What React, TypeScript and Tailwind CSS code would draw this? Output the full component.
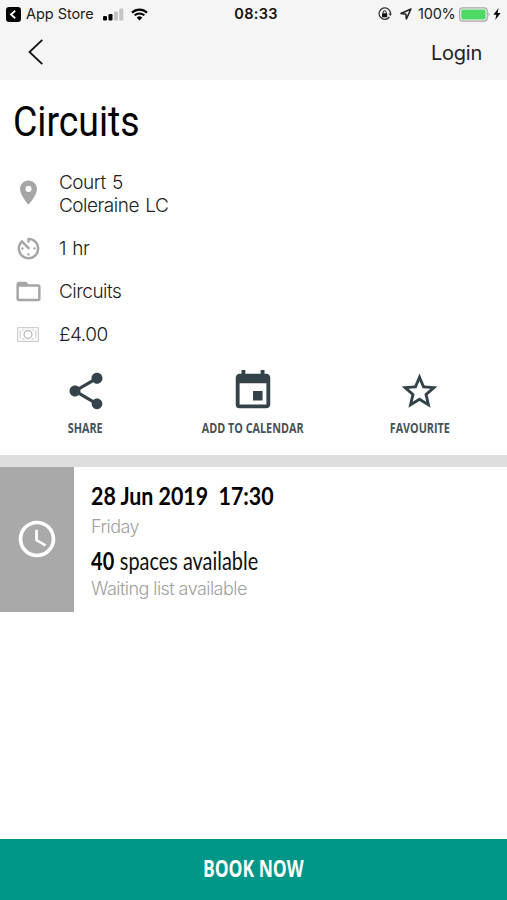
import React from 'react';
import {
  MdAvTimer,
  MdEvent,
  MdFolderOpen,
  MdPlace,
  MdSchedule,
  MdShare,
  MdStarBorder,
} from 'react-icons/md';

const StatusBar: React.FC = () => (
  <div className="grid h-7 grid-cols-[1fr_auto_1fr] items-center font-['Inter'] text-[14.5px] leading-7 text-[#222]">
    <div className="flex items-center pl-1.5">
      <svg width="15" height="15" viewBox="0 0 15 15">
        <rect width="15" height="15" rx="3.2" fill="#000" />
        <path d="M9.2 3.8 5 7.5l4.2 3.7" fill="none" stroke="#fff" strokeWidth="1.8" />
      </svg>
      <span className="ml-[5px] w-[68px] whitespace-nowrap tracking-[-0.05px]">App Store</span>
      <svg className="ml-[9px]" width="21" height="13" viewBox="0 0 21 13">
        <rect x="0" y="8" width="4" height="4.5" rx="1.2" fill="#000" />
        <rect x="5.5" y="6" width="4" height="6.5" rx="1.2" fill="#000" />
        <rect x="11" y="3.5" width="4" height="9" rx="1" fill="#c4c4c4" />
        <rect x="16.3" y="0.5" width="4" height="12" rx="1" fill="#c4c4c4" />
      </svg>
      <svg className="ml-[7px]" width="17" height="13" viewBox="0 0 17 13">
        <path d="M1 4.6a10.8 10.8 0 0 1 15 0" fill="none" stroke="#000" strokeWidth="2.2" />
        <path d="M3.6 7.4a7 7 0 0 1 9.8 0" fill="none" stroke="#000" strokeWidth="2" />
        <path d="M8.5 12.6 5.7 9.7a4 4 0 0 1 5.6 0z" fill="#000" />
      </svg>
    </div>
    <span className="pl-[5px] text-[14.5px] font-semibold tracking-[0.3px] text-[#111]">08:33</span>
    <div className="flex items-center justify-end pr-1.5">
      <svg width="14" height="14" viewBox="0 0 14 14">
        <path d="M11.4 10A5.7 5.7 0 1 1 12.5 6.6" fill="none" stroke="#333" strokeWidth="1.3" />
        <path d="M10.4 6.4h3.6l-1.7 2.6z" fill="#333" />
        <rect x="4" y="6.3" width="5.2" height="4" rx="0.5" fill="#111" />
        <path d="M5.1 6.4V5.2a1.5 1.5 0 0 1 3 0v1.2" fill="none" stroke="#111" strokeWidth="1" />
      </svg>
      <svg className="ml-2" width="12" height="12" viewBox="0 0 12 12">
        <path d="M10.9 1 1 5.4l4.9.8.5 4.8z" fill="none" stroke="#222" strokeWidth="1.6" strokeLinejoin="round" />
      </svg>
      <span className="ml-1.5 w-[38px] whitespace-nowrap text-[14.5px] tracking-[-0.2px]">100%</span>
      <svg className="ml-[3px]" width="32" height="15" viewBox="0 0 32 15">
        <rect x="0.6" y="0.9" width="27.6" height="13.2" rx="3" fill="none" stroke="#a6a6a6" strokeWidth="1.2" />
        <rect x="2.3" y="2.6" width="24.2" height="9.8" rx="1.4" fill="#4cd964" />
        <path d="M29.5 5.3q2.2 2.2 0 4.4z" fill="#a6a6a6" />
      </svg>
      <svg className="ml-0.5" width="8" height="12" viewBox="0 0 8 12">
        <path d="M5.6 0 .4 6.8h3L2.2 12l5.4-7H4.5z" fill="#000" />
      </svg>
    </div>
  </div>
);

const NavBar: React.FC = () => (
  <div className="flex h-[52px] items-center justify-between pr-[25px] pl-7">
    <button aria-label="Back" className="-mt-1">
      <svg width="16" height="28" viewBox="0 0 16 28">
        <path d="M14.3 1.8 1.5 14l12.8 12.2" fill="none" stroke="#111" strokeWidth="1.8" />
      </svg>
    </button>
    <button className="-mt-[3px] font-['Inter'] text-xl tracking-[-0.25px] text-[#222]">Login</button>
  </div>
);

interface DetailRowProps {
  icon: React.ReactNode;
  className: string;
  children: React.ReactNode;
}

const DetailRow: React.FC<DetailRowProps> = ({ icon, className, children }) => (
  <div className={`flex items-center ${className}`}>
    <div className="flex w-[56px] shrink-0 justify-center text-[#a5a5a5]">{icon}</div>
    <div className="ml-[3px] font-['Inter'] text-[19px] leading-[23px] font-light tracking-[-0.5px] text-[#222] [word-spacing:1.5px]">
      {children}
    </div>
  </div>
);

const MoneyIcon: React.FC = () => (
  <svg width="22" height="15" viewBox="0 0 22 15" fill="none" stroke="#c2c2c2">
    <rect x="0.7" y="0.7" width="20.6" height="13.6" strokeWidth="1" />
    <path d="M3.2 3.4v8.2M18.8 3.4v8.2M5 3h2.4M14.6 3H17M5 12h2.4M14.6 12H17" strokeWidth="0.9" />
    <circle cx="11" cy="7.5" r="3.9" strokeWidth="1.5" />
  </svg>
);

interface ActionProps {
  icon: React.ReactNode;
  label: string;
}

const Action: React.FC<ActionProps> = ({ icon, label }) => (
  <button className="flex w-[167px] flex-col items-center text-[#34434a]">
    <span className="flex h-[46px] items-center">{icon}</span>
    <span className="mt-[3px] inline-block scale-x-[0.72] font-['Open_Sans'] text-[15px] leading-5 font-bold whitespace-nowrap text-[#45535a]">
      {label}
    </span>
  </button>
);

export default function App() {
  return (
    <div className="flex h-[900px] w-[507px] flex-col overflow-hidden bg-white">
      <header className="h-20 shrink-0 bg-[#f5f5f5]">
        <StatusBar />
        <NavBar />
      </header>

      {/* Class details */}
      <section className="h-[375px] shrink-0">
        <h1 className="mt-[15px] ml-[13px] w-fit origin-left scale-x-[0.87] font-['Roboto'] text-[43px] leading-[52px] text-black">
          Circuits
        </h1>
        <DetailRow className="mt-6 h-[46px]" icon={<MdPlace size={29} className="-mt-[3px]" />}>
          Court 5
          <br />
          Coleraine LC
        </DetailRow>
        <DetailRow className="mt-2.5 h-[43px]" icon={<MdAvTimer size={29} />}>1 hr</DetailRow>
        <DetailRow className="h-[43px]" icon={<MdFolderOpen size={29} />}>Circuits</DetailRow>
        <DetailRow className="h-[43px]" icon={<MoneyIcon />}>£4.00</DetailRow>

        <div className="mt-3 flex justify-center pr-0.5">
          <Action icon={<MdShare size={44} />} label="SHARE" />
          <Action icon={<MdEvent size={46} />} label="ADD TO CALENDAR" />
          <Action icon={<MdStarBorder size={43} />} label="FAVOURITE" />
        </div>
      </section>

      <div className="h-3 shrink-0 bg-[#dedede]" />

      {/* Session slot */}
      <section className="flex h-[145px] shrink-0">
        <div className="flex w-[74px] items-center justify-center bg-[#a9a9a9] pb-0.5 text-white">
          <MdSchedule size={44} />
        </div>
        <div className="ml-[17px] pt-[13px] whitespace-nowrap">
          <p className="w-fit origin-left scale-x-[0.855] font-['Lato'] text-[25px] leading-[30px] font-bold text-black">
            28 Jun 2019&nbsp; 17:30
          </p>
          <p className="mt-[5px] font-['Inter'] text-[18px] leading-6 font-light tracking-[-0.55px] text-[#a0a0a0]">Friday</p>
          <p className="mt-[6px] w-fit origin-left scale-x-[0.795] font-['Lato'] text-[25px] leading-[30px] text-[#111]">
            <span className="font-bold tracking-[0.4px] text-black">40</span> spaces available
          </p>
          <p className="mt-[2px] font-['Inter'] text-[18px] leading-6 font-light tracking-[-0.55px] text-[#a0a0a0]">
            Waiting list available
          </p>
        </div>
      </section>

      <button className="mt-auto flex h-[61px] shrink-0 items-center justify-center bg-[#009688] pb-[3px] font-['Open_Sans'] text-[23px] font-bold text-white">
        <span className="inline-block scale-x-[0.76]">BOOK NOW</span>
      </button>
    </div>
  );
}
